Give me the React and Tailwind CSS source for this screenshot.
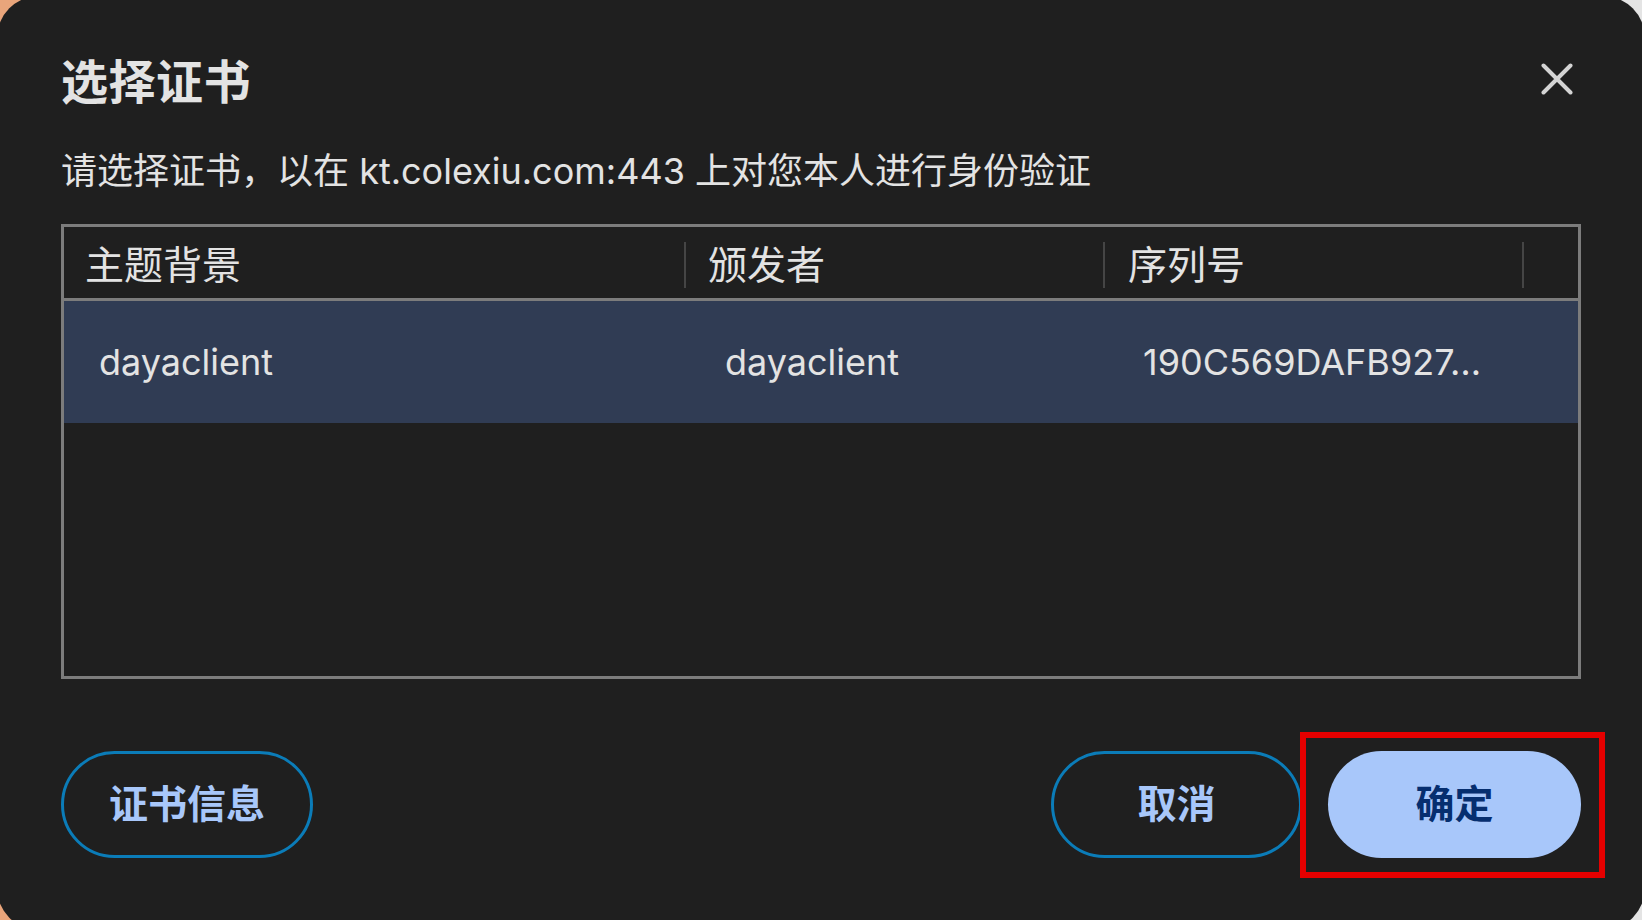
import { useState } from 'react';

const columns = [
  { key: 'subject', label: '主题背景', width: 'w-[622px]', cellPad: 'pl-[35px]', headPad: 'pl-[21px]' },
  { key: 'issuer', label: '颁发者', width: 'w-[419px]', cellPad: 'pl-[39px]', headPad: 'pl-[22px]' },
  { key: 'serial', label: '序列号', width: 'w-[419px]', cellPad: 'pl-[38px]', headPad: 'pl-[23px]' },
];

const certs = [
  { id: 1, subject: 'dayaclient', issuer: 'dayaclient', serial: '190C569DAFB927…' },
];

function CloseIcon() {
  return (
    <svg width="32" height="32" viewBox="0 0 32 32" fill="none">
      <path d="M2.5 2.5 L29.5 29.5 M29.5 2.5 L2.5 29.5" stroke="#d4d4d4" strokeWidth="4" strokeLinecap="round" />
    </svg>
  );
}

export default function App() {
  const [selected, setSelected] = useState(1);

  return (
    <div className="w-full h-[920px] overflow-hidden bg-[linear-gradient(to_right,#e9a57b_0%,#e9a57b_8%,#d9dde3_50%,#e4e4e4_100%)] font-[Inter,'Noto_Sans_CJK_SC',sans-serif]">
      <div className="relative -ml-[3px] -mt-[4px] w-[1648px] h-[934px] rounded-[42px] bg-[#1f1f1f] pl-[64px] pr-[64px] flex flex-col">
        {/* Header */}
        <div className="flex items-start justify-between pt-[54px]">
          <h1 className="text-[47px] leading-[64px] font-bold text-[#e3e3e3] tracking-[0.5px]">选择证书</h1>
          <button className="mt-[13px] mr-[8px]">
            <CloseIcon />
          </button>
        </div>
        <p className="mt-[33px] text-[36px] leading-[48px] text-[#e3e3e3]">
          请选择证书，以在 kt.colexiu.com:443 上对您本人进行身份验证
        </p>

        {/* Certificate table */}
        <div className="mt-[29px] h-[455px] border-[3px] border-[#7c7c7c] flex flex-col">
          <div className="h-[74px] flex items-center border-b-[3px] border-[#7c7c7c]">
            {columns.map((col) => (
              <div key={col.key} className={`${col.width} h-full flex items-center justify-between`}>
                <span className={`${col.headPad} text-[39px] text-[#e3e3e3] leading-none pt-[4px]`}>{col.label}</span>
                <div className="w-[2px] h-[46px] bg-[#454545] mt-[4px]" />
              </div>
            ))}
            <div className="flex-1" />
          </div>
          {certs.map((cert) => (
            <div
              key={cert.id}
              onClick={() => setSelected(cert.id)}
              className={`h-[122px] flex items-center ${selected === cert.id ? 'bg-[#303c54]' : ''}`}
            >
              {columns.map((col) => (
                <div key={col.key} className={`${col.width} ${col.cellPad} text-[36px] text-[#e3e3e3]`}>
                  {cert[col.key]}
                </div>
              ))}
            </div>
          ))}
        </div>

        {/* Actions */}
        <div className="mt-[72px] flex items-center">
          <button className="w-[252px] h-[107px] rounded-full border-[3px] border-[#0b7cb8] text-[39px] font-bold text-[#a8c7fa]">
            证书信息
          </button>
          <div className="flex-1" />
          <button className="w-[251px] h-[107px] rounded-full border-[3px] border-[#0b7cb8] text-[39px] font-bold text-[#a8c7fa]">
            取消
          </button>
          <button className="ml-[26px] w-[253px] h-[107px] rounded-full bg-[#a8c7fa] text-[39px] font-bold text-[#062e6f]">
            确定
          </button>
        </div>

        {/* highlight annotation */}
        <div className="absolute left-[1303px] top-[736px] w-[305px] h-[146px] border-[6px] border-[#e50000] pointer-events-none" />
      </div>
    </div>
  );
}
